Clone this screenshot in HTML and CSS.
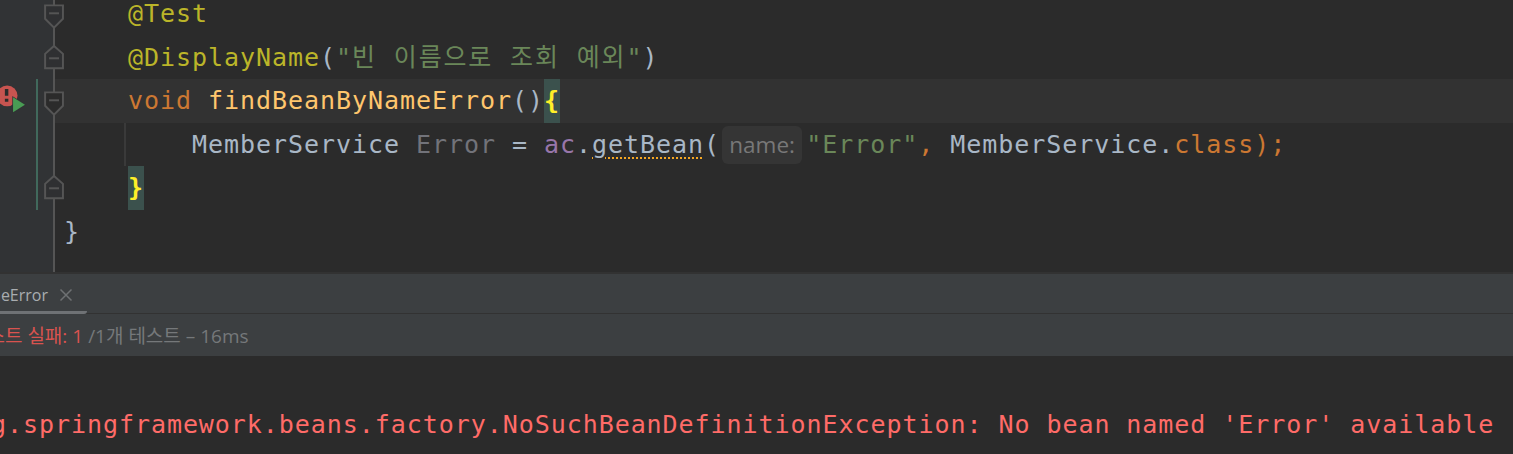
FILE: index.html
```html
<!DOCTYPE html>
<html lang="en">
<head>
<meta charset="utf-8">
<title>IDE test failure</title>
<link rel="stylesheet" href="styles.css">
</head>
<body>
<main class="ide">
  <section class="editor">
    <div class="lines">
      <div class="row">
        <div class="gutter"><span class="marks"></span><span class="change"></span>
          <svg class="fold" viewBox="0 0 26 44"><path d="M1 13.500H19V27L10 36L1 27Z"/><path class="dash" d="M5 21.500H15"/></svg></div>
        <div class="code">    <span class="ann">@Test</span></div>
      </div>
      <div class="row">
        <div class="gutter"><span class="marks"></span><span class="change"></span>
          <svg class="fold" viewBox="0 0 26 44"><path d="M10 10L19 18V32.500H1V18Z"/><path class="dash" d="M5 22.500H15"/></svg></div>
        <div class="code">    <span class="ann">@DisplayName</span>(<span class="str">"<span class="ko">빈 이름으로 조회 예외</span>"</span>)</div>
      </div>
      <div class="row current">
        <div class="gutter"><svg class="marks" viewBox="0 0 36 44"><circle cx="7" cy="17" r="10.500" fill="#c75450"/><path d="M6.500 10V17M6.500 20V23" stroke="#2b2b2b" stroke-width="3.500" fill="none"/><path d="M13 18.500L25 26L13 33.500Z" fill="#499c54" stroke="#313335" stroke-width="1.500" paint-order="stroke"/></svg><span class="change on"></span>
          <svg class="fold" viewBox="0 0 26 44"><path d="M1 13.500H19V27L10 36L1 27Z"/><path class="dash" d="M5 21.500H15"/></svg></div>
        <div class="code">    <span class="kw">void</span> <span class="fn">findBeanByNameError</span>()<span class="match">{</span></div>
      </div>
      <div class="row">
        <div class="gutter"><span class="marks"></span><span class="change on"></span><span class="fold"></span></div>
        <div class="code guide">        MemberService <span class="unused">Error</span> = <span class="field">ac</span>.<span class="warn">getBean</span>(<span class="hint">name:</span><span class="str">"Error"</span><span class="kw">,</span> MemberService.<span class="kw">class</span><span class="kw">);</span></div>
      </div>
      <div class="row">
        <div class="gutter"><span class="marks"></span><span class="change on"></span>
          <svg class="fold" viewBox="0 0 26 44"><path d="M10 10L19 18V32.500H1V18Z"/><path class="dash" d="M5 22.500H15"/></svg></div>
        <div class="code">    <span class="match">}</span></div>
      </div>
      <div class="row">
        <div class="gutter"><span class="marks"></span><span class="change"></span><span class="fold"></span></div>
        <div class="code">}</div>
      </div>
      <div class="row">
        <div class="gutter"><span class="marks"></span><span class="change"></span><span class="fold"></span></div>
        <div class="code"></div>
      </div>
    </div>
  </section>
  <section class="panel">
    <div class="tabs">
      <div class="tab"><span class="tab-name">findBeanByNameError</span></div>
      <svg class="close" viewBox="0 0 14 14"><path d="M1.500 1.500L12.500 12.500M12.500 1.500L1.500 12.500"/></svg>
    </div>
    <div class="status"><span class="fail">테스트 실패: 1</span><span class="count">/1개 테스트 – 16ms</span></div>
    <pre class="console">org.springframework.beans.factory.NoSuchBeanDefinitionException: No bean named 'Error' available</pre>
  </section>
</main>
</body>
</html>
```
FILE: styles.css
```css
html, body {
  margin: 0;
  height: 100%;
  background: #2b2b2b;
  overflow: hidden;
}
.ide {
  width: 1513px;
  height: 454px;
  display: flex;
  flex-direction: column;
  overflow: hidden;
}
.editor {
  height: 272px;
  flex: none;
  overflow: hidden;
  background: #2b2b2b;
}
.lines {
  margin-top: -8px;
}
.row {
  display: flex;
  height: 43.6px;
}
.row.current {
  background: #323232;
}
.gutter {
  flex: none;
  width: 64px;
  display: flex;
  background: linear-gradient(#313335, #313335) 0 0 / 53px 100% no-repeat;
}
.marks {
  flex: none;
  width: 36px;
  height: 43.6px;
}
.change {
  flex: none;
  width: 2px;
}
.change.on {
  background: #41695c;
}
.fold {
  flex: none;
  width: 26px;
  height: 43.6px;
  margin-left: 6px;
  overflow: visible;
  fill: #313335;
  stroke: #555555;
  stroke-width: 2;
  background: linear-gradient(#555555, #555555) 9px 0 / 2px 100% no-repeat;
}
.row .fold path {
  fill: #2f3032;
}
.row.current .fold path {
  fill: #2b2b2b;
}
.row .fold .dash {
  fill: none;
}
.code {
  flex: 1;
  white-space: pre;
  font: 25px/43.6px "DejaVu Sans Mono", monospace;
  letter-spacing: 0.95px;
  color: #a9b7c6;
}
.guide {
  background: linear-gradient(#3a3a3a, #3a3a3a) 60px 0 / 2px 100% no-repeat;
}
.ann { color: #bbb529; }
.str { color: #6a8759; font-family: "DejaVu Sans Mono", "Noto Sans CJK KR", monospace; }
.ko { letter-spacing: 1.85px; }
.kw { color: #cc7832; }
.fn { color: #ffc66d; }
.unused { color: #72737a; }
.field { color: #9876aa; }
.warn {
  text-decoration: underline dotted #f5a623 2px;
  text-underline-offset: 5px;
}
.match {
  display: inline-block;
  width: 16px;
  height: 43.6px;
  vertical-align: top;
  background: #3b514d;
  color: #ffef28;
  font-weight: bold;
}
.hint {
  display: inline-block;
  box-sizing: border-box;
  width: 80px;
  height: 38px;
  margin: 3px 4px 0 2px;
  vertical-align: top;
  text-align: center;
  background: #353535;
  border-radius: 6px;
  color: #787878;
  letter-spacing: 0;
  font: 22.5px/38px "Open Sans", sans-serif;
}
.panel {
  flex: 1;
  display: flex;
  flex-direction: column;
  min-height: 0;
  border-top: 2px solid #323232;
}
.tabs {
  flex: none;
  box-sizing: border-box;
  height: 40px;
  display: flex;
  align-items: flex-start;
  background: #3c3f41;
  border-bottom: 1px solid #323232;
}
.tab {
  flex: none;
  box-sizing: border-box;
  width: 87px;
  height: 40px;
  display: flex;
  justify-content: flex-end;
  overflow: hidden;
  border-bottom: 3px solid #6f7275;
  border-radius: 0 0 3px 0;
  white-space: nowrap;
}
.tab-name {
  flex: none;
  margin-right: 39px;
  font: 16px/43px "Open Sans", sans-serif;
  color: #a9adb0;
}
.close {
  flex: none;
  width: 14px;
  height: 14px;
  margin: 14px 0 0 -28px;
  fill: none;
  stroke: #6e7173;
  stroke-width: 1.500;
}
.status {
  flex: none;
  height: 42px;
  display: flex;
  align-items: center;
  gap: 5px;
  overflow: hidden;
  background: #3c3f41;
  white-space: nowrap;
  font: 19px "Open Sans", "Noto Sans CJK KR", sans-serif;
}
.fail {
  color: #d9534f;
  margin-left: -30px;
}
.count {
  color: #75787a;
}
.console {
  flex: none;
  margin: 47px 0 0 -41px;
  white-space: pre;
  font: 25px/44px "DejaVu Sans Mono", monospace;
  letter-spacing: 0.94px;
  color: #ff6b68;
}
```
